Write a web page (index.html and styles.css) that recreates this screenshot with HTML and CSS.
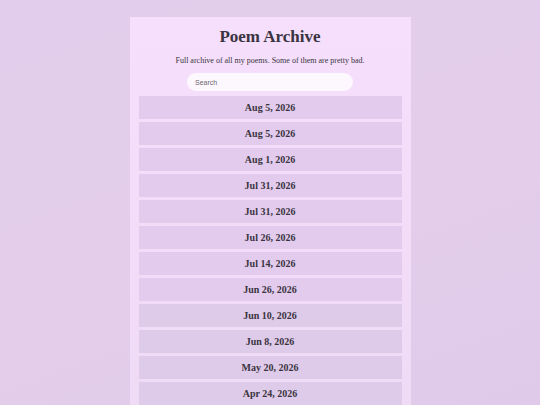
FILE: index.html
```html
<!DOCTYPE html>
<html lang="en">
<head>
    <meta charset="UTF-8">
    <meta name="viewport" content="width=device-width, initial-scale=1.0">
    <title>Poem Archive</title>
    <link rel="stylesheet" href="styles.css">
</head>
<body>
    <div class="archive">
        <h1>Poem Archive</h1>
        <p class="intro">Full archive of all my poems. Some of them are pretty bad.</p>
        <input type="text" class="search" placeholder="Search">
        <ul class="poems">
            <li>Aug 5, 2026</li>
            <li>Aug 5, 2026</li>
            <li>Aug 1, 2026</li>
            <li>Jul 31, 2026</li>
            <li>Jul 31, 2026</li>
            <li>Jul 26, 2026</li>
            <li>Jul 14, 2026</li>
            <li>Jun 26, 2026</li>
            <li>Jun 10, 2026</li>
            <li>Jun 8, 2026</li>
            <li>May 20, 2026</li>
            <li>Apr 24, 2026</li>
        </ul>
    </div>
</body>
</html>
```

FILE: styles.css
```css
body {
    margin: 0;
    font-family: "Liberation Serif", serif;
    color: #3a3440;
    background: linear-gradient(160deg, #e2cdec 0%, #e3cdeb 60%, #dfcaea 100%);
    height: 405px;
    overflow: hidden;
}
.archive {
    width: 263px;
    margin: 17px auto 0;
    padding: 9px 9px 0;
    background: linear-gradient(180deg, #f5dffc 0%, #f0dbf6 100%);
    display: flex;
    flex-direction: column;
    align-items: center;
}
h1 {
    font-size: 17px;
    margin: 1px 0 0;
    line-height: 20px;
}
.intro {
    font-size: 8px;
    margin: 9px 0 0;
    line-height: 10px;
}
.search {
    margin-top: 7px;
    width: 166px;
    height: 18px;
    box-sizing: border-box;
    border: none;
    border-radius: 9px;
    background: #fdf8fe;
    padding: 0 8px;
    font-family: "Liberation Sans", Arial, sans-serif;
    font-size: 7px;
    outline: none;
}
.search::placeholder {
    color: #6d6570;
}
.poems {
    list-style: none;
    margin: 5px 0 0;
    padding: 0;
    width: 100%;
    display: flex;
    flex-direction: column;
    gap: 3px;
}
.poems li {
    height: 23px;
    line-height: 23px;
    text-align: center;
    background: #e2cbed;
    font-weight: bold;
    font-size: 10px;
}
.poems li:nth-child(n+9) {
    background: #decae9;
}
```
